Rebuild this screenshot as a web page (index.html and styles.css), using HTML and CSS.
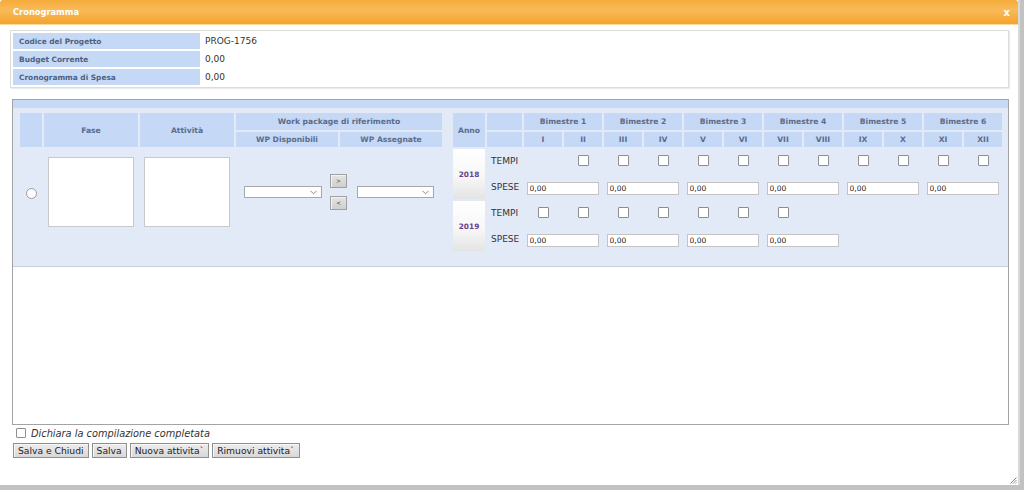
FILE: index.html
```html
<!DOCTYPE html>
<html lang="it">
<head>
<meta charset="utf-8">
<title>Cronogramma</title>
<link rel="stylesheet" href="styles.css">
</head>
<body>
<div class="dialog">
  <div class="titlebar">
    <span class="title">Cronogramma</span>
    <span class="close">x</span>
  </div>

  <div class="info">
    <table class="info-table">
      <tr><th>Codice del Progetto</th><td>PROG-1756</td></tr>
      <tr><th>Budget Corrente</th><td>0,00</td></tr>
      <tr><th>Cronogramma di Spesa</th><td>0,00</td></tr>
    </table>
  </div>

  <div class="panel">
    <div class="panel-strip"></div>
    <div class="panel-body">
      <table class="grid left-grid">
        <colgroup>
          <col class="w22"><col class="w94"><col class="w94"><col class="w102"><col class="w102">
        </colgroup>
        <thead>
          <tr class="h17">
            <th rowspan="2"></th>
            <th rowspan="2">Fase</th>
            <th rowspan="2">Attività</th>
            <th colspan="2">Work package di riferimento</th>
          </tr>
          <tr class="h15">
            <th>WP Disponibili</th>
            <th>WP Assegnate</th>
          </tr>
        </thead>
        <tbody>
          <tr>
            <td class="cell-radio"><input type="radio" class="radio" name="sel"></td>
            <td class="cell-ta"><textarea class="ta"></textarea></td>
            <td class="cell-ta"><textarea class="ta"></textarea></td>
            <td colspan="2" class="cell-wp">
              <div class="wp-transfer">
                <span class="sel sel1"><select class="select"></select><svg class="chev" width="7" height="5" viewBox="0 0 7 5"><path d="M0.5 0.8 L3.5 3.8 L6.5 0.8" fill="none" stroke="#8a8a8a" stroke-width="1"/></svg></span>
                <div class="mv-buttons">
                  <button class="mv">&gt;</button>
                  <button class="mv">&lt;</button>
                </div>
                <span class="sel sel2"><select class="select"></select><svg class="chev" width="7" height="5" viewBox="0 0 7 5"><path d="M0.5 0.8 L3.5 3.8 L6.5 0.8" fill="none" stroke="#8a8a8a" stroke-width="1"/></svg></span>
              </div>
            </td>
          </tr>
        </tbody>
      </table>

      <table class="grid right-grid">
        <colgroup>
          <col class="w32"><col class="w35">
          <col class="w38"><col class="w38"><col class="w38"><col class="w38">
          <col class="w38"><col class="w38"><col class="w38"><col class="w38">
          <col class="w38"><col class="w38"><col class="w38"><col class="w38">
        </colgroup>
        <thead>
          <tr class="h17">
            <th rowspan="2">Anno</th>
            <th></th>
            <th colspan="2">Bimestre 1</th>
            <th colspan="2">Bimestre 2</th>
            <th colspan="2">Bimestre 3</th>
            <th colspan="2">Bimestre 4</th>
            <th colspan="2">Bimestre 5</th>
            <th colspan="2">Bimestre 6</th>
          </tr>
          <tr class="h15">
            <th></th>
            <th>I</th><th>II</th><th>III</th><th>IV</th><th>V</th><th>VI</th>
            <th>VII</th><th>VIII</th><th>IX</th><th>X</th><th>XI</th><th>XII</th>
          </tr>
        </thead>
        <tbody>
          <tr class="brow">
            <td rowspan="2" class="anno">2018</td>
            <td class="lbl">TEMPI</td>
            <td></td>
            <td class="cb"><input type="checkbox" class="chk"></td>
            <td class="cb"><input type="checkbox" class="chk"></td>
            <td class="cb"><input type="checkbox" class="chk"></td>
            <td class="cb"><input type="checkbox" class="chk"></td>
            <td class="cb"><input type="checkbox" class="chk"></td>
            <td class="cb"><input type="checkbox" class="chk"></td>
            <td class="cb"><input type="checkbox" class="chk"></td>
            <td class="cb"><input type="checkbox" class="chk"></td>
            <td class="cb"><input type="checkbox" class="chk"></td>
            <td class="cb"><input type="checkbox" class="chk"></td>
            <td class="cb"><input type="checkbox" class="chk"></td>
          </tr>
          <tr class="brow">
            <td class="lbl">SPESE</td>
            <td colspan="2" class="sp"><input type="text" class="amt" value="0,00"></td>
            <td colspan="2" class="sp"><input type="text" class="amt" value="0,00"></td>
            <td colspan="2" class="sp"><input type="text" class="amt" value="0,00"></td>
            <td colspan="2" class="sp"><input type="text" class="amt" value="0,00"></td>
            <td colspan="2" class="sp"><input type="text" class="amt" value="0,00"></td>
            <td colspan="2" class="sp"><input type="text" class="amt" value="0,00"></td>
          </tr>
          <tr class="brow">
            <td rowspan="2" class="anno">2019</td>
            <td class="lbl">TEMPI</td>
            <td class="cb"><input type="checkbox" class="chk"></td>
            <td class="cb"><input type="checkbox" class="chk"></td>
            <td class="cb"><input type="checkbox" class="chk"></td>
            <td class="cb"><input type="checkbox" class="chk"></td>
            <td class="cb"><input type="checkbox" class="chk"></td>
            <td class="cb"><input type="checkbox" class="chk"></td>
            <td class="cb"><input type="checkbox" class="chk"></td>
            <td></td><td></td><td></td><td></td><td></td>
          </tr>
          <tr class="brow">
            <td class="lbl">SPESE</td>
            <td colspan="2" class="sp"><input type="text" class="amt" value="0,00"></td>
            <td colspan="2" class="sp"><input type="text" class="amt" value="0,00"></td>
            <td colspan="2" class="sp"><input type="text" class="amt" value="0,00"></td>
            <td colspan="2" class="sp"><input type="text" class="amt" value="0,00"></td>
            <td colspan="2"></td>
            <td colspan="2"></td>
          </tr>
        </tbody>
      </table>
    </div>
  </div>

  <div class="footer">
    <label class="confirm"><input type="checkbox" class="chk chk-confirm"><span>Dichiara la compilazione completata</span></label>
    <div class="actions">
      <button class="btn">Salva e Chiudi</button>
      <button class="btn">Salva</button>
      <button class="btn">Nuova attivita`</button>
      <button class="btn">Rimuovi attivita`</button>
    </div>
  </div>

  <svg class="grip" width="8" height="8" viewBox="0 0 8 8"><path d="M7.5 1.5 L1.5 7.5 M7.5 4 L4 7.5 M7.5 6.5 L6.5 7.5" stroke="#8a8a8a" stroke-width="1" fill="none"/></svg>
</div>
</body>
</html>
```

FILE: styles.css
```css
* { box-sizing: border-box; }
html, body { margin: 0; padding: 0; }
body {
  width: 1024px;
  height: 490px;
  overflow: hidden;
  background: #c2c2c2;
  font-family: "DejaVu Sans", Verdana, sans-serif;
  color: #333;
}
.dialog {
  position: relative;
  width: 1020px;
  height: 485px;
  background: #fff;
  border-right: 2px solid #d9d9d9;
}
.titlebar {
  height: 25px;
  display: flex;
  align-items: center;
  justify-content: space-between;
  padding: 0 8px 0 13px;
  border-radius: 3px 3px 0 0;
  background: linear-gradient(#f5ab3a, #f8bb58 40%, #f7b34a 60%, #f3a42d);
  border-bottom: 1px solid #fbd89b;
}
.title { color: #fff; font-weight: bold; font-size: 8.3px; }
.close { color: #fff; font-weight: bold; font-size: 10px; }

/* info box */
.info {
  margin: 5px 0 0 10px;
  width: 999px;
  border: 1px solid #dcdcdc;
  box-shadow: 1px 1px 1px #ececec;
}
.info-table { border-spacing: 2px; width: 100%; }
.info-table th {
  width: 187px;
  height: 16px;
  padding: 0 0 0 6px;
  background: #c5d8f6;
  color: #4e5f7d;
  font-size: 7.4px;
  font-weight: bold;
  text-align: left;
}
.info-table td {
  padding: 0 0 0 3px;
  font-size: 9px;
  color: #333;
}

/* main panel */
.panel {
  margin: 11px 0 0 12px;
  width: 997px;
  height: 326px;
  border: 1px solid #a3a3a3;
}
.panel-strip { height: 8px; background: #c8d9f5; }
.panel-body {
  height: 159px;
  display: flex;
  align-items: flex-start;
  gap: 7px;
  padding: 3px 0 0 5px;
  background: #e3eaf7;
  border-bottom: 1px solid #c7d0df;
}
.grid {
  border-collapse: separate;
  border-spacing: 2px;
  table-layout: fixed;
}
.grid th {
  padding: 0;
  background: #c5d8f6;
  color: #5b6c8b;
  font-size: 7.6px;
  font-weight: bold;
  text-align: center;
  vertical-align: middle;
}
.grid td { padding: 0; }
.h17 { height: 17px; }
.h15 { height: 15px; }
.w22 { width: 22px; }
.w94 { width: 94px; }
.w102 { width: 102px; }
.w32 { width: 32px; }
.w35 { width: 35px; }
.w38 { width: 38px; }
.left-grid { width: 426px; }
.right-grid { width: 553px; }

/* left grid body */
.cell-radio { text-align: center; vertical-align: middle; }
.radio {
  appearance: none;
  -webkit-appearance: none;
  width: 11px;
  height: 11px;
  margin: 0;
  border: 1px solid #9a9a9a;
  border-radius: 50%;
  background: #fff;
  vertical-align: middle;
}
.cell-ta { padding: 8px 4px !important; }
.ta {
  display: block;
  width: 86px;
  height: 70px;
  margin: 0;
  border: 1px solid #c9c9c9;
  background: #fff;
  resize: none;
}
.cell-wp { vertical-align: middle; }
.wp-transfer {
  display: flex;
  align-items: center;
  padding-left: 8px;
}
.sel { position: relative; display: block; }
.sel1 { width: 78px; }
.sel2 { width: 77px; margin-left: 10px; }
.select {
  appearance: none;
  -webkit-appearance: none;
  display: block;
  width: 100%;
  height: 12px;
  margin: 0;
  padding: 0;
  border: 1px solid #a8a8a8;
  border-radius: 0;
  background: #fff;
}
.chev { position: absolute; right: 5px; top: 4px; }
.mv-buttons {
  display: flex;
  flex-direction: column;
  gap: 8px;
  margin-left: 8px;
}
.mv {
  width: 17px;
  height: 14px;
  margin: 0;
  padding: 0;
  border: 1px solid #a0a0a0;
  background: linear-gradient(#e4e4e4, #cfcfcf);
  box-shadow: inset 1px 1px 0 #f3f3f3;
  color: #333;
  font-family: "DejaVu Sans", sans-serif;
  font-size: 6px;
  line-height: 12px;
}

/* right grid body */
.brow { height: 24px; }
.anno {
  vertical-align: middle;
  text-align: center;
  background: linear-gradient(#ffffff 0%, #f7f7f7 55%, #e4e4e4 100%);
  color: #6b3f8c;
  font-size: 7.4px;
  font-weight: bold;
}
.lbl {
  padding-left: 4px !important;
  font-size: 9px;
  color: #333;
  vertical-align: middle;
}
.cb { text-align: center; vertical-align: middle; }
.chk {
  appearance: none;
  -webkit-appearance: none;
  display: inline-block;
  width: 11px;
  height: 11px;
  margin: 0 0 3px 0;
  border: 1px solid #8e8e8e;
  border-radius: 1px;
  background: #fff;
  vertical-align: middle;
}
.sp { text-align: center; vertical-align: middle; }
.amt {
  display: inline-block;
  width: 72px;
  height: 13px;
  margin: 0 1px 0 0;
  padding: 0 2px;
  border: 1px solid #c4c4c4;
  background: #fff;
  font-family: "DejaVu Sans", sans-serif;
  font-size: 7.5px;
  color: #222;
  vertical-align: middle;
}

/* footer */
.footer { padding: 1px 0 0 13px; }
.confirm {
  display: flex;
  align-items: center;
  gap: 5px;
  height: 14px;
  padding-left: 3px;
  font-size: 9.8px;
  font-style: italic;
  color: #333;
}
.chk-confirm { width: 10px; height: 10px; margin: 0; }
.actions {
  display: flex;
  gap: 3px;
  margin-top: 3px;
}
.btn {
  height: 15px;
  margin: 0;
  padding: 0 4px;
  border: 1px solid #8f8f8f;
  background: linear-gradient(#ececec, #d9d9d9);
  box-shadow: inset 1px 1px 0 #f7f7f7;
  color: #222;
  font-family: "DejaVu Sans", sans-serif;
  font-size: 9.2px;
  line-height: 12px;
}
.grip { position: absolute; right: 1px; bottom: 1px; }
```
